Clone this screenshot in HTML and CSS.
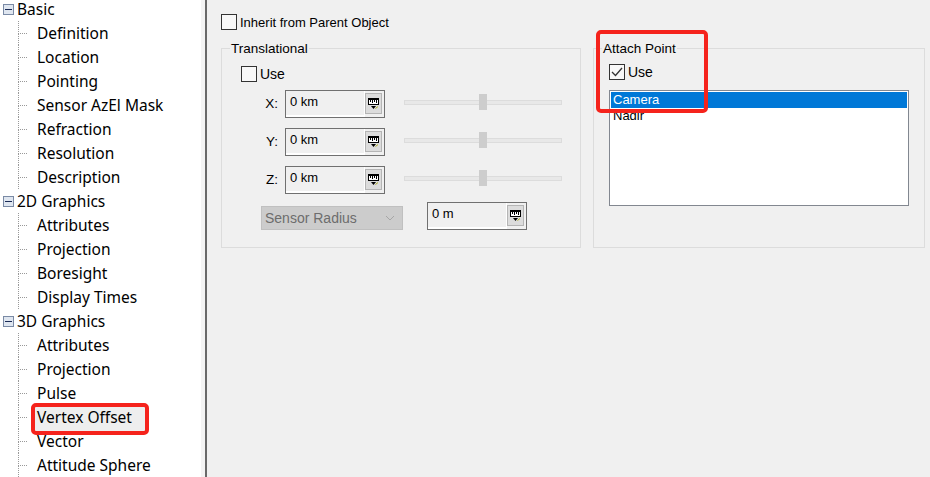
FILE: index.html
```html
<!DOCTYPE html>
<html lang="en">

<head>
  <meta charset="UTF-8">
  <title>Vertex Offset</title>
  <link rel="stylesheet" href="styles.css">
</head>

<body>
  <div class="window">
    <div class="tree">
      <div class="rows">
        <div class="node"><span class="toggle"></span>Basic</div>
        <div class="leaf">Definition</div>
        <div class="leaf">Location</div>
        <div class="leaf">Pointing</div>
        <div class="leaf">Sensor AzEl Mask</div>
        <div class="leaf">Refraction</div>
        <div class="leaf">Resolution</div>
        <div class="leaf">Description</div>
        <div class="node"><span class="toggle"></span>2D Graphics</div>
        <div class="leaf">Attributes</div>
        <div class="leaf">Projection</div>
        <div class="leaf">Boresight</div>
        <div class="leaf">Display Times</div>
        <div class="node"><span class="toggle"></span>3D Graphics</div>
        <div class="leaf">Attributes</div>
        <div class="leaf">Projection</div>
        <div class="leaf">Pulse</div>
        <div class="leaf selected">Vertex Offset<span class="mark mark-tree"></span></div>
        <div class="leaf">Vector</div>
        <div class="leaf">Attitude Sphere</div>
      </div>
    </div>

    <div class="panel">
      <label class="check inherit"><span class="box"></span>Inherit from Parent Object</label>

      <div class="groups">
        <fieldset class="group translational">
          <legend>Translational</legend>
          <div class="group-body">
            <label class="check use"><span class="box"></span>Use</label>

            <div class="axis">
              <span class="axis-label">X:</span>
              <div class="field"><span class="value">0 km</span><span class="unit"><svg width="11" height="11" viewBox="0 0 11 11"><path d="M0 0h11v7H0z" fill="#000"/><path d="M1 2h9v4H1z" fill="#fff"/><path d="M2.500 2v2M4.500 2v3M6.500 2v2M8.500 2v3" stroke="#000"/><path d="M3 8h5l-2.500 3z" fill="#000"/><path d="M7.500 10.500l2.500-2" stroke="#a8a820"/></svg></span></div>
              <div class="slider"><span class="thumb"></span></div>
            </div>
            <div class="axis">
              <span class="axis-label">Y:</span>
              <div class="field"><span class="value">0 km</span><span class="unit"><svg width="11" height="11" viewBox="0 0 11 11"><path d="M0 0h11v7H0z" fill="#000"/><path d="M1 2h9v4H1z" fill="#fff"/><path d="M2.500 2v2M4.500 2v3M6.500 2v2M8.500 2v3" stroke="#000"/><path d="M3 8h5l-2.500 3z" fill="#000"/><path d="M7.500 10.500l2.500-2" stroke="#a8a820"/></svg></span></div>
              <div class="slider"><span class="thumb"></span></div>
            </div>
            <div class="axis">
              <span class="axis-label">Z:</span>
              <div class="field"><span class="value">0 km</span><span class="unit"><svg width="11" height="11" viewBox="0 0 11 11"><path d="M0 0h11v7H0z" fill="#000"/><path d="M1 2h9v4H1z" fill="#fff"/><path d="M2.500 2v2M4.500 2v3M6.500 2v2M8.500 2v3" stroke="#000"/><path d="M3 8h5l-2.500 3z" fill="#000"/><path d="M7.500 10.500l2.500-2" stroke="#a8a820"/></svg></span></div>
              <div class="slider"><span class="thumb"></span></div>
            </div>

            <div class="radius">
              <div class="combo">Sensor Radius<svg width="10" height="6" viewBox="0 0 10 6"><path d="M1 1l4 4 4-4" fill="none" stroke="#a6a6a6"/></svg></div>
              <div class="field"><span class="value">0 m</span><span class="unit"><svg width="11" height="11" viewBox="0 0 11 11"><path d="M0 0h11v7H0z" fill="#000"/><path d="M1 2h9v4H1z" fill="#fff"/><path d="M2.500 2v2M4.500 2v3M6.500 2v2M8.500 2v3" stroke="#000"/><path d="M3 8h5l-2.500 3z" fill="#000"/><path d="M7.500 10.500l2.500-2" stroke="#a8a820"/></svg></span></div>
            </div>
          </div>
        </fieldset>

        <fieldset class="group attach">
          <legend>Attach Point</legend>
          <div class="group-body">
            <label class="check use"><span class="box"><svg width="14" height="14" viewBox="0 0 14 14"><path d="M2 7l3.500 3.500L12 3" fill="none" stroke="#333" stroke-width="1.300"/></svg></span>Use</label>
            <div class="listbox">
              <div class="option active">Camera</div>
              <div class="option">Nadir</div>
            </div>
          </div>
          <span class="mark mark-attach"></span>
        </fieldset>
      </div>
    </div>
  </div>
</body>

</html>
```

FILE: styles.css
```css
html, body {
  margin: 0;
  height: 100%;
  overflow: hidden;
}

.window {
  display: flex;
  height: 477px;
  background: #f0f0f0;
  color: #000;
}

/* tree on the left */
.tree {
  flex: none;
  box-sizing: border-box;
  width: 207px;
  background: #fff;
  border-right: 2px solid #696969;
  box-shadow: inset -4px 0 0 #f4f4f4;
  font-family: "Noto Sans", sans-serif;
  font-size: 15.500px;
  line-height: 18px;
  overflow: hidden;
}

.node, .leaf {
  position: relative;
  display: flex;
  align-items: center;
  height: 24px;
  white-space: nowrap;
}

.node {
  padding-left: 3px;
}

/* first row is cut short by the top of the window */
.node:first-child {
  height: 18px;
  margin-bottom: 3px;
}

.leaf {
  padding-left: 37px;
}

.leaf::before {
  content: "";
  position: absolute;
  left: 18px;
  top: 0;
  height: 12px;
  width: 8px;
  border-left: 1px dotted #999;
  border-bottom: 1px dotted #999;
}

.leaf::after {
  content: "";
  position: absolute;
  left: 18px;
  top: 12px;
  bottom: 0;
  border-left: 1px dotted #999;
}

.toggle {
  position: relative;
  box-sizing: border-box;
  width: 11px;
  height: 11px;
  margin-right: 3px;
  border: 1px solid #7a8aa5;
  background: #dfe6f0;
}

.toggle::after {
  content: "";
  position: absolute;
  left: 1px;
  top: 4px;
  width: 7px;
  height: 1px;
  background: #1a2a55;
}

.selected {
  z-index: 1;
}

/* red annotation frames */
.mark {
  position: absolute;
  box-sizing: border-box;
  border: 4px solid #f5231c;
  border-radius: 5px;
  pointer-events: none;
}

.mark-tree {
  left: 31px;
  top: -2px;
  width: 118px;
  height: 32px;
  background: #eeeeee;
  z-index: -1;
}

.mark-attach {
  left: 2px;
  top: -26px;
  width: 112px;
  height: 83px;
}

/* property panel */
.panel {
  flex: 1;
  min-width: 0;
  padding: 14px 0 0 14px;
  font-family: "Liberation Sans", sans-serif;
  font-size: 13px;
}

.check {
  display: flex;
  align-items: center;
  gap: 3px;
}

.box {
  box-sizing: border-box;
  display: block;
  width: 16px;
  height: 16px;
  border: 1px solid #333;
  background: #f8f8f8;
}

.box svg {
  display: block;
}

.groups {
  display: flex;
  gap: 12px;
  margin-top: 11px;
}

.group {
  position: relative;
  box-sizing: border-box;
  margin: 0;
  padding: 0;
  min-width: 0;
  height: 207px;
  border: 1px solid #dcdcdc;
}

.group legend {
  padding: 0 1px;
  margin-left: 8px;
  font-size: 13.500px;
  line-height: 15px;
}

.translational {
  width: 360px;
}

.translational .group-body {
  padding-left: 19px;
}

.attach {
  flex: 1;
  margin-right: 5px;
}

.attach .group-body {
  padding-left: 15px;
}

.use {
  margin-top: 10px;
  font-size: 14px;
}

.attach .use {
  margin-top: 8px;
}

.axis {
  display: flex;
  align-items: center;
  height: 28px;
  margin-top: 10px;
}

.use + .axis {
  margin-top: 8px;
}

.axis-label {
  width: 44px;
  padding: 0 7px 2px 0;
  box-sizing: border-box;
  text-align: right;
  font-size: 13.500px;
}

.field {
  box-sizing: border-box;
  display: flex;
  align-items: flex-start;
  width: 100px;
  height: 28px;
  border: 1px solid #707070;
  background: #f0f0f0;
}

.value {
  box-sizing: border-box;
  flex: 1;
  height: 26px;
  padding: 3px 0 0 4px;
  border-right: 1px solid #fff;
  border-bottom: 2px solid #fff;
  line-height: 15px;
}

.unit {
  display: flex;
  align-items: center;
  justify-content: center;
  box-sizing: border-box;
  width: 17px;
  height: 21px;
  margin: 2px 2px 0 0;
  border: 1px solid #b5b5b5;
  background: #dcdcdc;
}

.slider {
  position: relative;
  box-sizing: border-box;
  width: 158px;
  height: 5px;
  margin: 0 0 3px 19px;
  border: 1px solid #dcdcdc;
  background: #e8e8e8;
}

.thumb {
  position: absolute;
  left: 74px;
  top: -7px;
  width: 8px;
  height: 16px;
  background: #cdcdcd;
}

.radius {
  display: flex;
  align-items: flex-end;
  gap: 24px;
  margin-top: 8px;
  margin-left: 20px;
}

.combo {
  display: flex;
  align-items: center;
  justify-content: space-between;
  box-sizing: border-box;
  width: 142px;
  height: 24px;
  padding: 0 7px 0 3px;
  border: 1px solid #c0c0c0;
  background: #cccccc;
  color: #6d6d6d;
  font-size: 14px;
}

.listbox {
  box-sizing: border-box;
  width: 300px;
  height: 116px;
  margin-top: 10px;
  padding: 1px;
  border: 1px solid #828790;
  background: #fff;
}

.option {
  height: 16px;
  padding-left: 2px;
  line-height: 16px;
}

.active {
  background: #0078d7;
  color: #fff;
}
```
